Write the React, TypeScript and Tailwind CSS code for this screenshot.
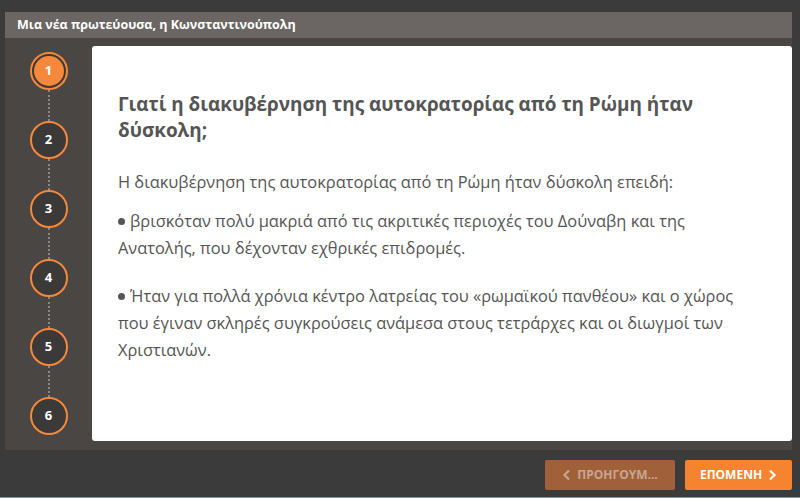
import React from "react";

const steps = [1, 2, 3, 4, 5, 6];

function Step({ n, active }: { n: number; active?: boolean }) {
  if (active) {
    return (
      <div className="flex h-[38px] w-[38px] items-center justify-center rounded-full border-2 border-[#f5883b] bg-[#3c3a38]">
        <div className="flex h-[30px] w-[30px] items-center justify-center rounded-full bg-[#f5883b] text-[13px] font-bold text-white">
          {n}
        </div>
      </div>
    );
  }
  return (
    <div className="flex h-[38px] w-[38px] items-center justify-center rounded-full border-2 border-[#f5883b] bg-[#3c3a38] text-[13px] font-bold text-white">
      {n}
    </div>
  );
}

function Dots() {
  return <div className="h-[31px] w-0 border-l-2 border-dotted border-[#8a8785]" />;
}

function Bullet() {
  return <span className="mb-[3px] mr-[5px] inline-block h-[7px] w-[7px] rounded-full bg-[#555] align-middle" />;
}

export default function App() {
  return (
    <div
      className="flex h-[498px] w-[800px] flex-col bg-[#3b3b3b]"
      style={{ fontFamily: '"Open Sans", "Noto Sans", sans-serif' }}
    >
      <div className="ml-[5px] mr-[8px] mt-[12px] flex h-[26px] items-center bg-[#6b6663] px-3 text-[12.5px] font-bold text-white">
        Μια νέα πρωτεύουσα, η Κωνσταντινούπολη
      </div>
      <div className="ml-[5px] mr-[8px] flex h-[412px] bg-[#4a4643] pb-[9px] pt-[8px]">
        <div className="flex w-[87px] flex-col items-center pt-[6px]">
          {steps.map((n, i) => (
            <React.Fragment key={n}>
              {i > 0 && <Dots />}
              <Step n={n} active={i === 0} />
            </React.Fragment>
          ))}
        </div>
        <div className="flex-1 rounded-[3px] bg-white pl-[26px] pr-[48px] pt-[45px] text-[#555]">
          <h1 className="text-[18.9px] font-bold leading-[26px]">
            Γιατί η διακυβέρνηση της αυτοκρατορίας από τη Ρώμη ήταν δύσκολη;
          </h1>
          <div className="mt-[25px] text-[16.4px] leading-[27px]">
            <p>Η διακυβέρνηση της αυτοκρατορίας από τη Ρώμη ήταν δύσκολη επειδή:</p>
            <p className="mt-[12px]">
              <Bullet />
              βρισκόταν πολύ μακριά από τις ακριτικές περιοχές του Δούναβη και της Ανατολής,
              που δέχονταν εχθρικές επιδρομές.
            </p>
            <p className="mt-[21px]">
              <Bullet />
              Ήταν για πολλά χρόνια κέντρο λατρείας του «ρωμαϊκού πανθέου» και ο χώρος που
              έγιναν σκληρές συγκρούσεις ανάμεσα στους τετράρχες και οι διωγμοί των Χριστιανών.
            </p>
          </div>
        </div>
      </div>
      <div className="mr-[8px] mt-[10px] flex justify-end gap-[10px]">
        <button className="flex h-[30px] w-[130px] items-center justify-center gap-[6px] rounded-[2px] bg-[#a0603a] text-[12px] font-bold text-[#c9a591]">
          <svg width="9" height="12" viewBox="0 0 9 12" fill="none" stroke="currentColor" strokeWidth="2.2">
            <path d="M7 1.5L2.5 6L7 10.5" />
          </svg>
          ΠΡΟΗΓΟΥΜ...
        </button>
        <button className="flex h-[30px] w-[107px] items-center justify-center gap-[6px] rounded-[2px] bg-[#f5832f] text-[12px] font-bold text-white">
          ΕΠΟΜΕΝΗ
          <svg width="9" height="12" viewBox="0 0 9 12" fill="none" stroke="currentColor" strokeWidth="2.2">
            <path d="M2 1.5L6.5 6L2 10.5" />
          </svg>
        </button>
      </div>
      <div className="mt-auto h-px bg-[#5a9bd5]" />
    </div>
  );
}
